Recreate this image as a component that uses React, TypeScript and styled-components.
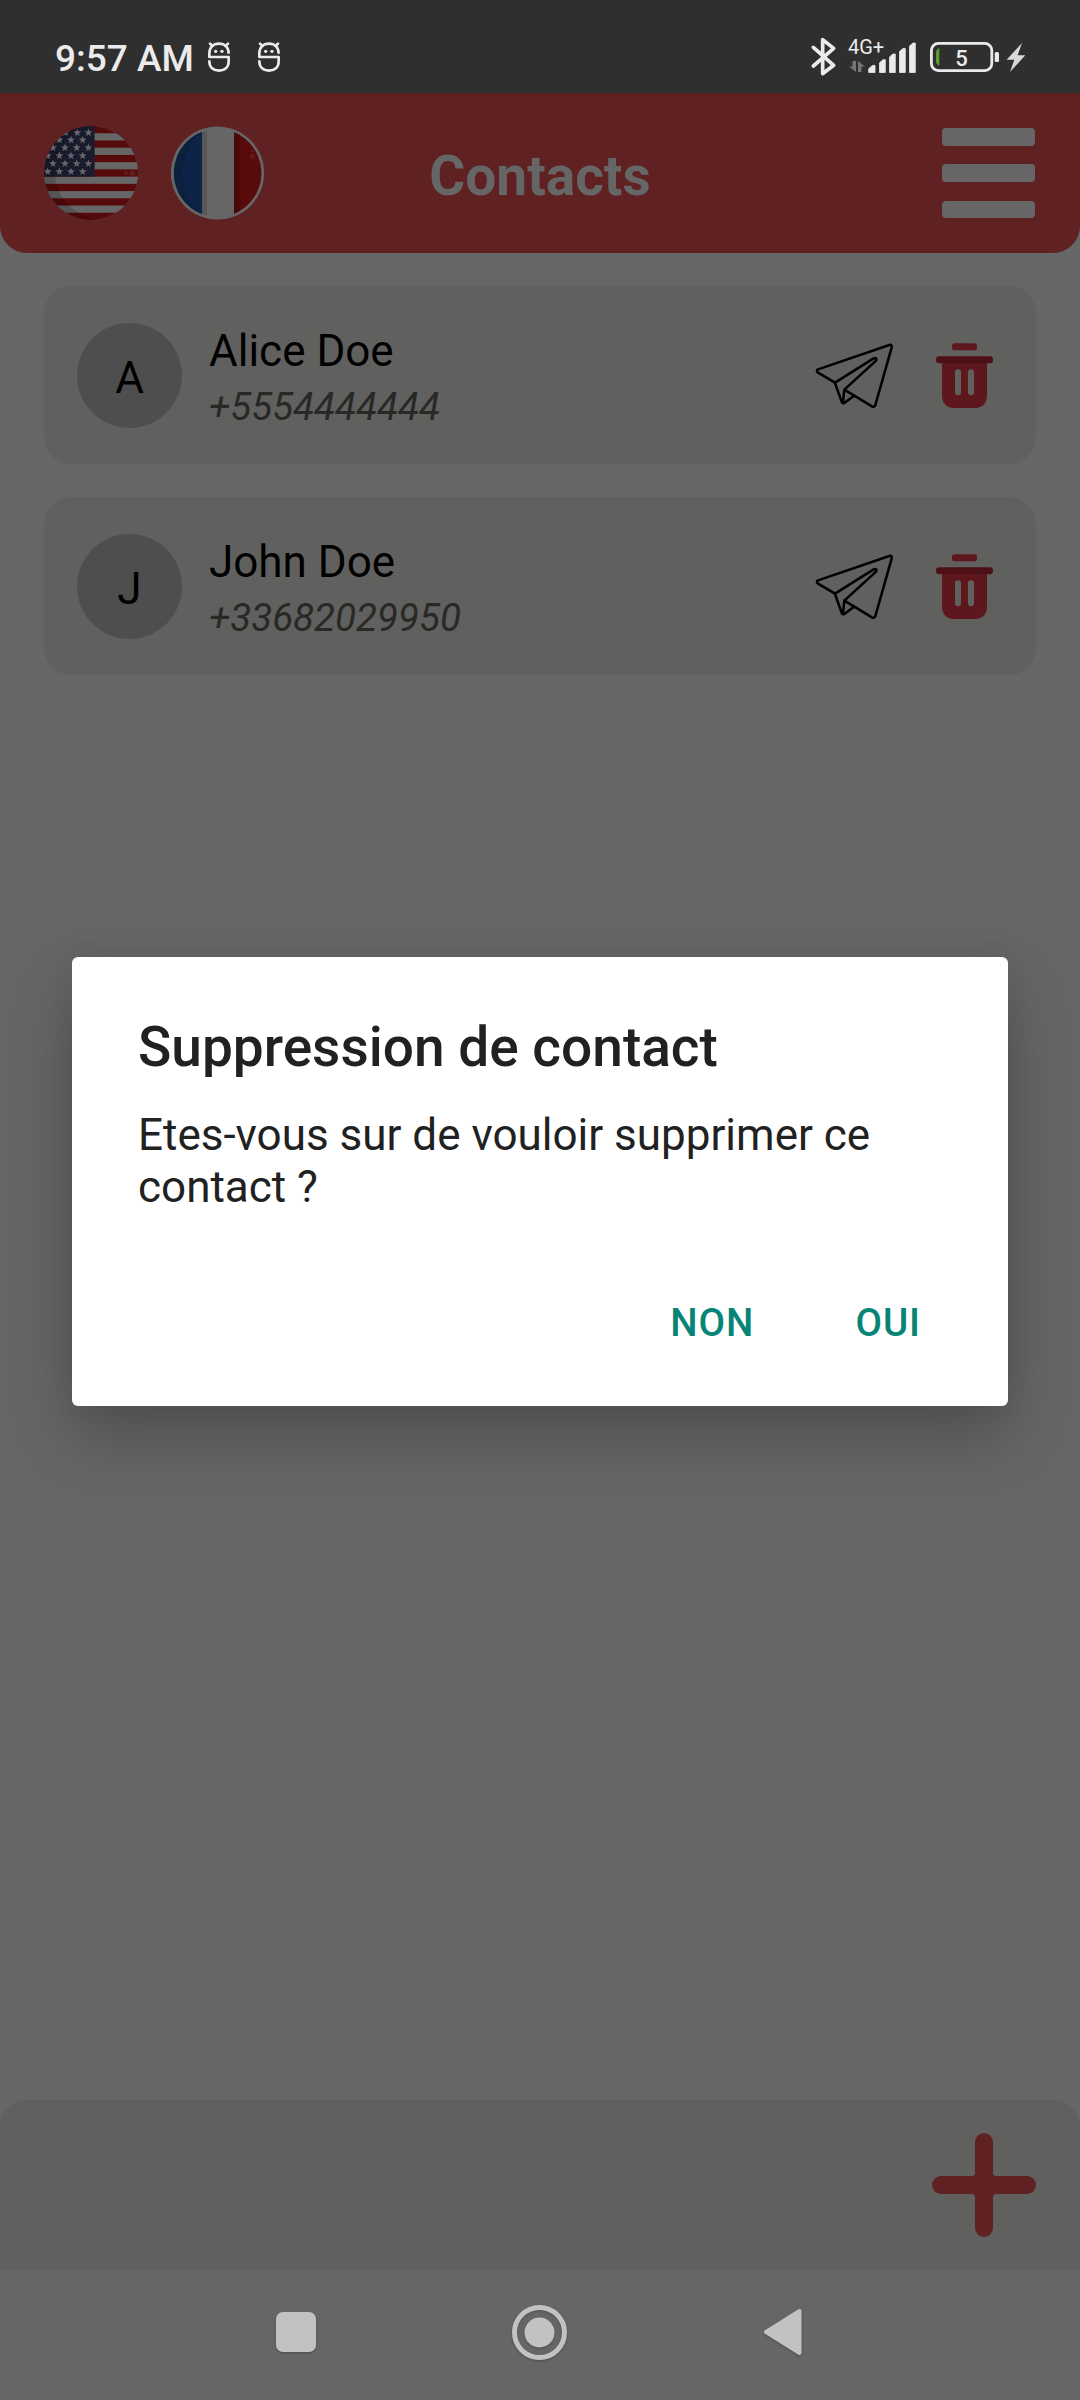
import React from "react";
import styled, { createGlobalStyle } from "styled-components";

const GlobalStyle = createGlobalStyle`
  * { box-sizing: border-box; }
  body { margin: 0; background: #666666; }
`;

const Screen = styled.main`
  position: relative;
  display: flex;
  flex-direction: column;
  width: 1080px;
  height: 2400px;
  overflow: hidden;
  background: #666666;
  font-family: Roboto, "Noto Sans", sans-serif;
`;

const StatusBar = styled.div`
  display: flex;
  align-items: flex-start;
  height: 93px;
  padding: 37px 54px 0 55px;
  background: #2f2f2f;
  color: #ebebeb;
`;

const Clock = styled.time`
  width: 153px;
  margin-top: -1px;
  font-size: 37px;
  line-height: 46px;
  font-weight: 500;
  white-space: nowrap;
`;

const Notifications = styled.div`
  display: flex;
  flex: 1;
  gap: 28px;
  padding-top: 5px;
`;

const StatusIcons = styled.div`
  display: flex;
`;

const Glyph = styled.svg<{ $ml?: number; $mt?: number }>`
  display: block;
  flex: none;
  overflow: visible;
  margin-left: ${(p) => p.$ml ?? 0}px;
  margin-top: ${(p) => p.$mt ?? 0}px;
`;

const Header = styled.header`
  display: grid;
  grid-template-columns: 1fr auto 1fr;
  align-items: center;
  height: 160px;
  padding: 0 44px;
  border-radius: 0 0 27px 27px;
  background: #5f2121;
`;

const Languages = styled.div`
  display: flex;
  gap: 33px;
`;

const PageTitle = styled.h1`
  margin: 6px 0 0;
  font-size: 55px;
  line-height: 64px;
  font-weight: 700;
  color: #666666;
`;

const MenuButton = styled.button`
  display: flex;
  flex-direction: column;
  justify-content: space-between;
  justify-self: end;
  width: 93px;
  height: 90px;
  margin-right: 1px;
  padding: 0;
  border: 0;
  background: none;
`;

const MenuBar = styled.span`
  height: 17.5px;
  border-radius: 4px;
  background: #666666;
`;

const ContactList = styled.section`
  display: flex;
  flex: 1;
  flex-direction: column;
  gap: 33px;
  padding: 33px 44px;
`;

const ContactCard = styled.article`
  display: flex;
  align-items: center;
  height: 178px;
  padding: 0 43px 0 33px;
  border-radius: 27px;
  background: #60605e;
`;

const Avatar = styled.div`
  display: flex;
  align-items: center;
  justify-content: center;
  width: 105px;
  height: 105px;
  padding-top: 5px;
  border-radius: 50%;
  background: #4e4e4e;
  color: #000;
  font-size: 44px;
  line-height: 52px;
`;

const ContactInfo = styled.div`
  display: flex;
  flex: 1;
  flex-direction: column;
  gap: 7px;
  margin: 5px 0 0 27px;
`;

const ContactName = styled.span`
  font-size: 44px;
  line-height: 52px;
  color: #000;
`;

const ContactPhone = styled.span`
  font-size: 38.5px;
  line-height: 46px;
  font-style: italic;
  color: #282827;
`;

const CardActions = styled.div`
  display: flex;
  gap: 43px;
`;

const BottomBar = styled.footer`
  display: flex;
  align-items: center;
  justify-content: flex-end;
  height: 170px;
  padding: 0 44px;
  border-radius: 27px 27px 0 0;
  background: #60605e;
`;

const NavigationBar = styled.nav`
  display: flex;
  align-items: center;
  height: 130px;
  padding: 0 278px 6px 275.5px;
  justify-content: space-between;
`;

const NavIcon = styled.svg`
  display: block;
  overflow: visible;
  fill: #c2c2c2;
  filter: drop-shadow(0 1px 1px rgba(0, 0, 0, 0.25));
`;

const DialogLayer = styled.div`
  position: absolute;
  inset: 0;
  display: flex;
  align-items: flex-start;
  justify-content: center;
  padding-top: 957px;
`;

const Dialog = styled.div`
  display: flex;
  flex-direction: column;
  width: 936px;
  height: 449px;
  padding: 58px 66px 0;
  border-radius: 6px;
  background: #fff;
  box-shadow: 0 30px 66px rgba(0, 0, 0, 0.24), 0 0 24px rgba(0, 0, 0, 0.05);
`;

const DialogTitle = styled.h2`
  margin: 0;
  font-size: 55px;
  line-height: 64px;
  font-weight: 500;
  color: #212121;
`;

const DialogMessage = styled.p`
  margin: 30px 0 0;
  font-size: 44px;
  line-height: 52px;
  color: #212121;
`;

const DialogActions = styled.div`
  display: flex;
  justify-content: flex-end;
  gap: 101px;
  margin-top: 87px;
  padding-right: 21px;
`;

const DialogButton = styled.button`
  padding: 0;
  border: 0;
  background: none;
  font: 500 38.5px/46px Roboto, "Noto Sans", sans-serif;
  letter-spacing: 1px;
  color: #068577;
`;

const AppNotification = () => (
  <Glyph width="22" height="30" viewBox="0 0 66 90" fill="none" stroke="#ebebeb" strokeWidth="8">
    <path d="M62 35C62 16 50 5 33 5S4 16 4 35V45H62V58C62 76 50 86 33 86S4 76 4 58V55" strokeLinejoin="round" />
    <path d="M6 5L13 12M60 5L53 12" strokeLinecap="round" />
    <g fill="#ebebeb" stroke="none">
      <circle cx="23" cy="28" r="5" />
      <circle cx="42" cy="28" r="5" />
    </g>
  </Glyph>
);

const Bluetooth = () => (
  <Glyph width="25" height="39" viewBox="0 0 75 117" fill="none" stroke="#ebebeb" strokeWidth="11">
    <path d="M7 31L68 85L35 110V8L68 34L7 87" strokeLinecap="round" strokeLinejoin="round" />
  </Glyph>
);

const SignalText = styled.text`
  font: 400 20px Roboto, "Noto Sans", sans-serif;
  fill: #ebebeb;
`;

const Signal = () => (
  <Glyph $ml={12} width="68" height="38" viewBox="0 0 68 38" fill="#ebebeb">
    <SignalText x="0" y="17">4G+</SignalText>
    <path fill="#777" d="M4.5 24H8V35L1 29.5H4.5ZM10 24L16.8 29.5H13.5V35H10Z" />
    <path d="M20.7 31.8L24.5 28.4H27V35.5H20.7ZM31.5 25.8L35 22.7H37.3V35.5H31.5ZM41.5 20L45 17H47.3V35.5H41.5ZM51.5 14.5L55 11.4H57.3V35.5H51.5ZM61.5 9L65 6H67.3V35.5H61.5Z" stroke="#ebebeb" strokeWidth="0.8" strokeLinejoin="round" />
  </Glyph>
);

const BatteryText = styled.text`
  font: 500 22px Roboto, "Noto Sans", sans-serif;
  fill: #ebebeb;
`;

const Battery = () => (
  <Glyph $ml={14} $mt={5} width="70" height="30" viewBox="0 0 70 30">
    <rect x="1.4" y="1.4" width="60.4" height="27.2" rx="7" fill="none" stroke="#ebebeb" strokeWidth="2.8" />
    <path d="M9.3 6V24Q6 22 6 19V11Q6 7 9.3 6Z" fill="#5a9e2f" />
    <rect x="64.7" y="10" width="4.3" height="10" rx="1.5" fill="#ebebeb" />
    <BatteryText x="31.5" y="23.5" textAnchor="middle">5</BatteryText>
  </Glyph>
);

const Charging = () => (
  <Glyph $ml={6} $mt={5} width="20" height="31" viewBox="0 0 60 93" fill="#d8d8d8">
    <path d="M48 3L2 53H25L12 90L58 40H35Z" />
  </Glyph>
);

const STAR_ROWS: Array<[number, number[]]> = [
  [6.7, [21.5, 33.3, 44.5]],
  [14, [15.4, 27, 38.7]],
  [21.7, [9, 21, 32.7, 44.4]],
  [29.7, [3.7, 15.4, 27, 38.7]],
  [37.6, [9, 21, 32.7, 44.4]],
  [45.6, [3.7, 15.4, 27, 38.7]],
];

const starPoints = (cx: number, cy: number) =>
  Array.from({ length: 10 }, (_, i) => {
    const r = i % 2 ? 1.7 : 4.1;
    const a = (Math.PI * i) / 5 - Math.PI / 2;
    return `${(cx + r * Math.cos(a)).toFixed(2)},${(cy + r * Math.sin(a)).toFixed(2)}`;
  }).join(" ");

const UsFlag = () => (
  <Glyph width="94" height="94" viewBox="0 0 94 94">
    <clipPath id="us-disc"><circle cx="47" cy="47" r="47" /></clipPath>
    <g clipPath="url(#us-disc)">
      <rect width="94" height="94" fill="#666666" />
      {[0, 1, 2, 3, 4, 5, 6].map((i) => (
        <rect key={i} y={i * 14.46} width="94" height="7.23" fill="#560a0b" />
      ))}
      <rect width="50.6" height="50.6" fill="#1b1b2e" />
      <path d="M-2-2H54C28 0 11 20 11 46C11 72 31 92 60 94V96H-2Z" fill="#000" opacity="0.16" />
      {STAR_ROWS.map(([y, xs]) => xs.map((x) => <polygon key={`${x}-${y}`} points={starPoints(x, y)} fill="#68686c" />))}
      <circle cx="82" cy="47" r="1.9" fill="#621b1b" />
      <circle cx="88.3" cy="47" r="3" fill="#621b1b" />
    </g>
  </Glyph>
);

const FrenchFlag = () => (
  <Glyph width="93" height="94" viewBox="0 0 93 94">
    <clipPath id="fr-disc"><circle cx="46.7" cy="47" r="43.8" /></clipPath>
    <circle cx="46.5" cy="47" r="46.6" fill="#666666" />
    <g clipPath="url(#fr-disc)">
      <rect width="31" height="94" fill="#0d2448" />
      <path d="M0 0H31V6C5 26 5 70 31 88V94H0Z" fill="#0a203c" />
      <rect x="31" width="5" height="94" fill="#575757" />
      <rect x="63" width="30" height="94" fill="#590a0a" />
      <rect x="63" width="6" height="94" fill="#4a0909" />
      <circle cx="81.5" cy="30.5" r="2.8" fill="#641818" />
      <circle cx="81.5" cy="24.5" r="1.4" fill="#641818" />
    </g>
  </Glyph>
);

const PaperPlane = () => (
  <Glyph width="77" height="65" viewBox="108 218 231 195" fill="none" stroke="#000" strokeWidth="7.6" strokeLinejoin="round" strokeLinecap="round">
    <path d="M112 298L328 224Q337 221 335 232L286 404Q283 412 276 408L193 358L289 270Q291 260 281 264L165 337L114 307Q109 302 112 298Z" />
    <path d="M165 338L186 397Q189 400 193 398L222 376M193 358L189 396" />
  </Glyph>
);

const Trash = () => (
  <Glyph width="57" height="65" viewBox="468 218 171 195">
    <rect x="516" y="219" width="75" height="21" rx="8" fill="#5d171d" />
    <path fillRule="evenodd" fill="#5d171d" d="M486 275H621V373Q621 413 581 413H526Q486 413 486 373ZM525 305V366Q525 375 534 375T543 366V305Q543 297 534 297T525 305ZM564 305V366Q564 375 573 375T582 366V305Q582 297 573 297T564 305Z" />
    <rect x="468" y="258" width="171" height="21" rx="9" fill="#4e1017" />
  </Glyph>
);

const Plus = () => (
  <Glyph width="104" height="104" viewBox="0 0 104 104" fill="#5f2121">
    <rect x="43" width="18" height="104" rx="9" />
    <rect y="43" width="104" height="18" rx="9" />
    <path d="M41 43L43 41H61L63 43V61L61 63H43L41 61Z" />
  </Glyph>
);

const contacts = [
  { name: "Alice Doe", phone: "+5554444444" },
  { name: "John Doe", phone: "+33682029950" },
];

export default function App() {
  return (
    <>
      <GlobalStyle />
      <Screen>
        <StatusBar>
          <Clock>9:57 AM</Clock>
          <Notifications>
            <AppNotification />
            <AppNotification />
          </Notifications>
          <StatusIcons>
            <Bluetooth />
            <Signal />
            <Battery />
            <Charging />
          </StatusIcons>
        </StatusBar>
        <Header>
          <Languages>
            <UsFlag />
            <FrenchFlag />
          </Languages>
          <PageTitle>Contacts</PageTitle>
          <MenuButton aria-label="Menu">
            <MenuBar />
            <MenuBar />
            <MenuBar />
          </MenuButton>
        </Header>
        <ContactList>
          {contacts.map((c) => (
            <ContactCard key={c.name}>
              <Avatar>{c.name[0]}</Avatar>
              <ContactInfo>
                <ContactName>{c.name}</ContactName>
                <ContactPhone>{c.phone}</ContactPhone>
              </ContactInfo>
              <CardActions>
                <PaperPlane />
                <Trash />
              </CardActions>
            </ContactCard>
          ))}
        </ContactList>
        <BottomBar>
          <Plus />
        </BottomBar>
        <NavigationBar>
          <NavIcon width="40" height="40" viewBox="0 0 40 40">
            <rect width="40" height="40" rx="7" />
          </NavIcon>
          <NavIcon width="55" height="55" viewBox="0 0 55 55">
            <circle cx="27.5" cy="27.5" r="25" fill="none" stroke="#c2c2c2" strokeWidth="5" />
            <circle cx="27.5" cy="27.5" r="15" />
          </NavIcon>
          <NavIcon width="38" height="46" viewBox="0 0 38 46">
            <path d="M2 23L35.5 2V44Z" stroke="#c2c2c2" strokeWidth="4" strokeLinejoin="round" />
          </NavIcon>
        </NavigationBar>
        <DialogLayer>
          <Dialog role="dialog">
            <DialogTitle>Suppression de contact</DialogTitle>
            <DialogMessage>Etes-vous sur de vouloir supprimer ce contact ?</DialogMessage>
            <DialogActions>
              <DialogButton>NON</DialogButton>
              <DialogButton>OUI</DialogButton>
            </DialogActions>
          </Dialog>
        </DialogLayer>
      </Screen>
    </>
  );
}
